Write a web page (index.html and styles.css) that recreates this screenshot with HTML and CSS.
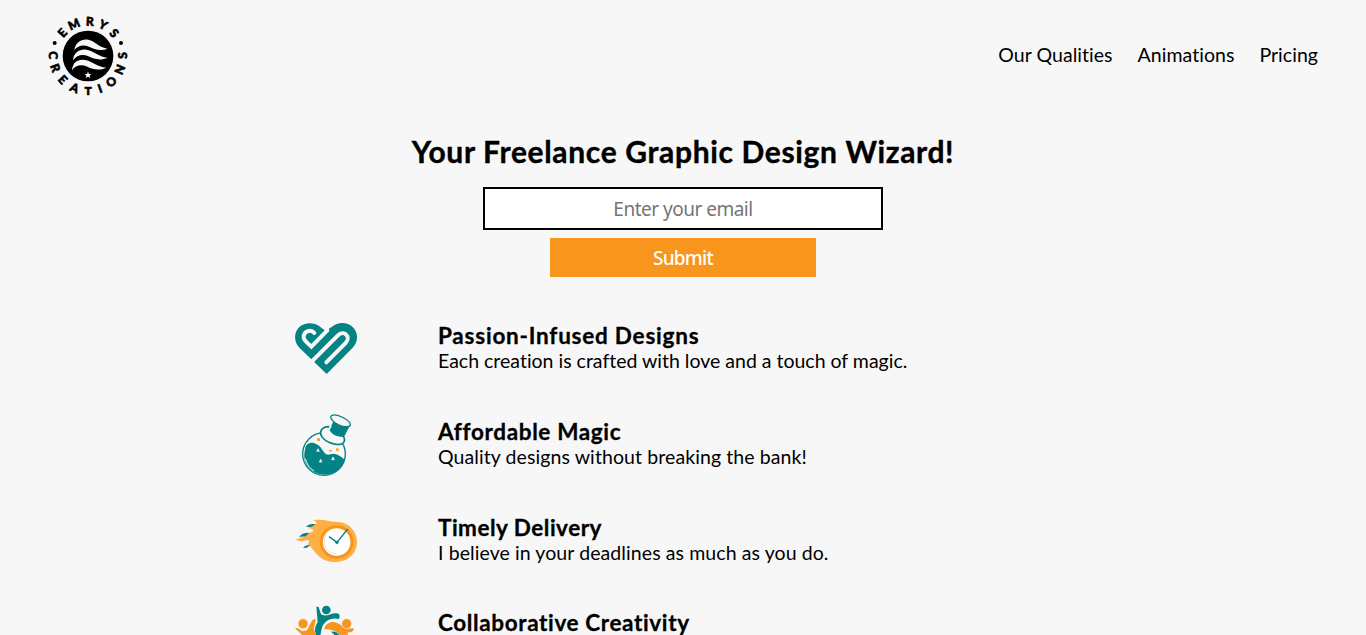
FILE: index.html
```html
<!DOCTYPE html>
<html lang="en">
<head>
<meta charset="utf-8">
<title>Emrys Creations</title>
<link rel="stylesheet" href="styles.css">
</head>
<body>
<header class="header">
  <svg class="logo" viewBox="24 24 240 240" role="img" aria-label="Emrys Creations">
    <circle cx="144" cy="144" r="76"/>
    <g class="wave">
      <path d="M103 126C106 103 126 91 145 95C166 99 173 116 202 122C180 131 164 124 147 116C130 109 114 112 103 126Z"/>
      <path d="M99 157C101 134 118 123 138 125C162 128 174 146 203 149C181 159 163 153 145 145C127 137 111 141 99 157Z"/>
      <path d="M96 187C98 163 114 153 134 156C157 159 171 177 199 179C179 188 160 185 142 176C124 168 107 171 96 187Z"/>
      <path d="M144 191l3 7 7 0-5 5 2 7-7-4-7 4 2-7-5-5 7 0Z"/>
    </g>
    <circle cx="44" cy="105" r="6"/><circle cx="243" cy="105" r="6"/>
    <g class="ring" transform="translate(144 144)">
      <text transform="rotate(-48)" y="-91">E</text><text transform="rotate(-24)" y="-91">M</text><text transform="rotate(3)" y="-91">R</text><text transform="rotate(26)" y="-91">Y</text><text transform="rotate(49)" y="-91">S</text>
      <text transform="rotate(91)" y="117">C</text><text transform="rotate(70)" y="117">R</text><text transform="rotate(47)" y="117">E</text><text transform="rotate(23)" y="117">A</text><text transform="rotate(0)" y="117">T</text><text transform="rotate(-20)" y="117">I</text><text transform="rotate(-42)" y="117">O</text><text transform="rotate(-67)" y="117">N</text><text transform="rotate(-91)" y="117">S</text>
    </g>
  </svg>
  <nav class="nav"><a>Our Qualities</a><a>Animations</a><a>Pricing</a></nav>
</header>
<main>
  <h1 class="title">Your Freelance Graphic Design Wizard!</h1>
  <form class="signup">
    <input class="email" type="email" placeholder="Enter your email">
    <button class="submit" type="button">Submit</button>
  </form>
  <section class="features">
    <article class="feature">
      <svg class="icon" viewBox="27 21 192 192">
        <path class="teal" d="M125 192L43 113C25 94 27 66 43 51C60 36 87 37 102 48L122 63L144 48C160 36 188 36 203 51C221 69 220 95 203 113Z"/>
        <path class="cut" d="M80 155L158 77C177 58 199 80 182 99L124 157"/>
        <path class="cut" d="M88 69C77 55 58 65 56 78C55 88 60 92 79 110L127 61"/>
      </svg>
      <div class="copy"><h2 class="h-passion">Passion-Infused Designs</h2><p>Each creation is crafted with love and a touch of magic.</p></div>
    </article>
    <article class="feature">
      <svg class="icon" viewBox="12 24 192 192">
        <circle class="glass" cx="102" cy="147" r="64"/>
        <path class="teal" d="M47 124C58 106 83 113 95 132C104 145 109 152 120 148C137 142 148 151 164 164C157 192 132 208 102 209C65 207 40 180 43 145Z"/>
        <path class="shine" d="M46 161Q53 187 72 198"/>
        <path class="collar" d="M116 65C94 66 87 81 95 94C106 111 139 124 156 116C168 110 164 96 157 91L118 72Z"/>
        <path class="teal" d="M132 46L118 74C125 89 143 97 162 95L181 60Z"/>
        <path class="collar-light" d="M123 62L116 74"/>
        <path class="hat" d="M126 31C116 34 127 52 147 60C163 67 181 67 181 59C182 47 143 25 126 31Z"/>
        <path class="spark" d="M81 99h9v9h-9zM118 134h7v7h-7zM138 130h8v8h-8z"/>
        <path class="bubble" d="M84 131l4 8h-8zM92 163l4 8h-8zM129 156l4 8h-8z"/>
      </svg>
      <div class="copy"><h2 class="h-affordable">Affordable Magic</h2><p class="p-affordable">Quality designs without breaking the bank!</p></div>
    </article>
    <article class="feature">
      <svg class="icon" viewBox="27 12 192 192">
        <path class="flame" d="M155 51C129 49 113 41 84 46Q97 50 94 57C80 56 74 61 70 71Q80 67 86 78C67 84 54 101 32 103Q44 112 58 107Q74 101 72 112Q66 117 72 121Q76 123 80 129C97 151 115 174 155 171C185 170 216 149 216 111C216 75 188 51 155 51Z"/>
        <circle class="rim" cx="155" cy="111" r="46"/>
        <path class="shade" d="M123 89C109 117 124 145 154 146"/>
        <path class="hands" d="M132 95L156 112L188 72"/><circle class="teal" cx="156" cy="112" r="5"/>
        <path class="teal" d="M63 66Q70 55 91 57L81 65ZM42 96Q51 82 73 83L62 94ZM54 129Q61 119 76 120L66 128Z"/>
      </svg>
      <div class="copy"><h2 class="h-timely">Timely Delivery</h2><p class="p-timely">I believe in your deadlines as much as you do.</p></div>
    </article>
    <article class="feature feature-last">
      <svg class="icon" viewBox="27 30 192 90">
        <path class="teal" d="M94 35L101 36L108 58C125 69 139 49 161 56Q167 63 161 72C138 66 116 78 110 101L106 122L94 122Q84 102 98 81Z"/>
        <circle class="teal" cx="124" cy="45" r="13"/>
        <path class="orange" d="M30 100L38 99L51 109L66 106L82 75L91 71L92 77L86 102L98 130L50 130L49 118ZM117 103C126 77 146 78 163 87C178 100 192 101 205 100Q209 107 199 111L187 113L193 130L174 130C162 114 145 101 117 103Z"/>
        <circle class="head" cx="54" cy="86" r="15"/><circle class="head" cx="185" cy="86" r="15"/>
        <path class="teal" d="M138 110Q156 108 165 123L150 121Z"/>
      </svg>
      <div class="copy"><h2 class="h-collab">Collaborative Creativity</h2></div>
    </article>
  </section>
</main>
</body>
</html>
```
FILE: styles.css
```css
* { box-sizing: border-box; margin: 0; padding: 0; }
html { overflow: hidden; }
body { height: 635px; overflow: hidden; background: #f7f7f7; color: #000; font: 19.5px/25px Lato, sans-serif; font-variant-ligatures: none; }
.header { display: flex; justify-content: space-between; align-items: center; height: 112px; padding: 0 48px; }
.logo { width: 80px; height: 80px; overflow: visible; }
.wave { fill: #f7f7f7; }
.ring { font: 900 36px Lato, sans-serif; text-anchor: middle; stroke: #000; stroke-width: 1.8; stroke-linejoin: round; }
.nav { display: flex; gap: 25px; padding-bottom: 3px; letter-spacing: .04px; }
.title { height: 56px; margin-top: 12px; text-align: center; font: 700 30px/55px Lato, sans-serif; letter-spacing: .65px; -webkit-text-stroke: .4px #000; }
.signup { display: flex; flex-direction: column; align-items: center; gap: 8px; margin-top: 7px; }
.email { width: 400px; height: 43px; border: 2px solid #000; background: #fff; text-align: center; font: 19px "Noto Sans", sans-serif; letter-spacing: -.5px; }
.email::placeholder { color: #757575; opacity: 1; }
.submit { width: 266px; height: 39px; padding-top: 1px; border: 0; background: #f8951d; color: #fff; font: 500 19px "Noto Sans", sans-serif; letter-spacing: -.75px; }
.features { display: grid; gap: 32px; width: 778px; margin: 40px auto 0; }
.feature { display: flex; gap: 80px; height: 64px; align-items: center; }
.feature-last { height: 30px; align-items: flex-start; }
.feature-last .icon { height: 30px; }
.feature-last .copy { height: 24px; padding-top: 5px; }
.icon { width: 64px; height: 64px; flex: none; }
.copy { height: 53px; white-space: nowrap; }
.copy h2 { font: 700 22.5px/25px Lato, sans-serif; letter-spacing: .78px; -webkit-text-stroke: .3px #000; }
.copy .h-affordable { letter-spacing: .65px; }
.copy .h-timely { letter-spacing: .5px; }
.copy .h-collab { letter-spacing: .63px; }
.p-affordable { letter-spacing: .09px; }
.p-timely { letter-spacing: .09px; }
.teal { fill: #038383; }
.orange { fill: #f8951d; }
.head { fill: #f8951d; stroke: #f7f7f7; stroke-width: 2; }
.cut { fill: none; stroke: #f7f7f7; stroke-width: 12; stroke-linecap: round; }
.glass { fill: #f7f7f7; stroke: #038383; stroke-width: 4; }
.shine { fill: none; stroke: #f7f7f7; stroke-width: 3; }
.collar { fill: #f7f7f7; stroke: #038383; stroke-width: 5; }
.collar-light { fill: none; stroke: #f7f7f7; stroke-width: 6; }
.hat { fill: #f7f7f7; stroke: #038383; stroke-width: 4; }
.spark { fill: #f8951d; opacity: .8; }
.bubble { fill: #f7f7f7; stroke: #f7f7f7; stroke-width: 2; }
.flame { fill: #ffb044; }
.rim { fill: #fff; stroke: #f8951d; stroke-width: 9; }
.shade { fill: none; stroke: #dedede; stroke-width: 3; }
.hands { fill: none; stroke: #038383; stroke-width: 4; }
```
